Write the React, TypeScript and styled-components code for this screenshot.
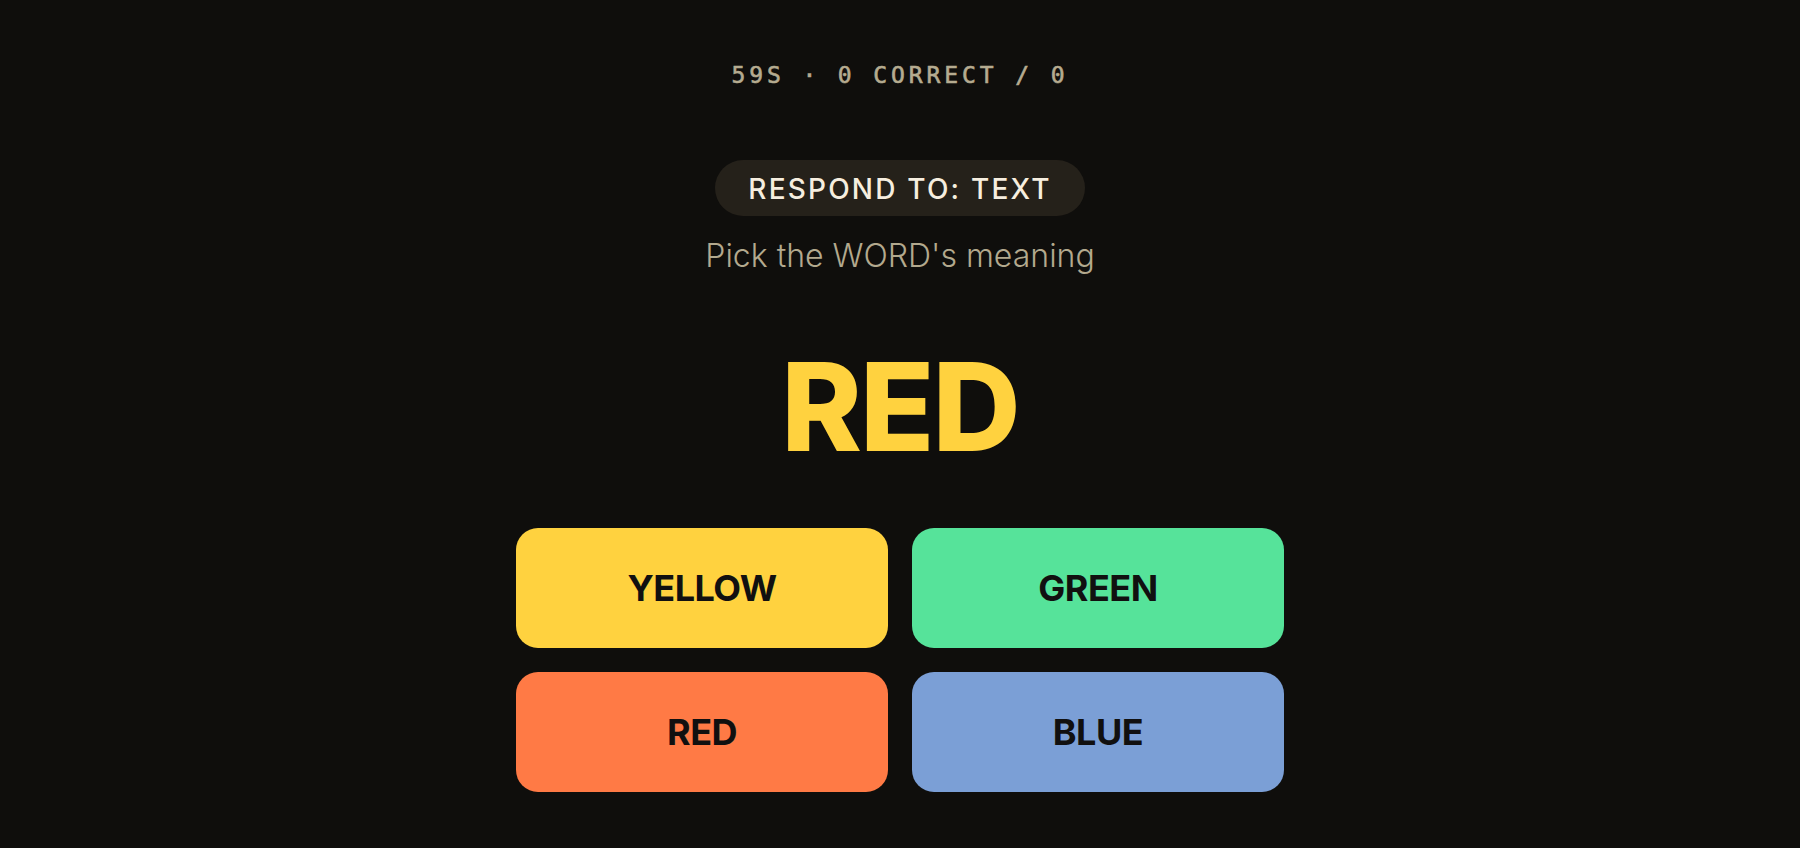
import React from "react";
import styled, { createGlobalStyle } from "styled-components";

const Global = createGlobalStyle`
  html, body { margin: 0; padding: 0; background: #0f0e0c; }
  body { font-family: Inter, "Noto Sans", sans-serif; }
`;

const Page = styled.main`
  min-height: 848px;
  box-sizing: border-box;
  padding-top: 61px;
  display: flex;
  flex-direction: column;
  align-items: center;
  background: #0f0e0c;
`;

const Stats = styled.div`
  font-family: "DejaVu Sans Mono", "Liberation Mono", monospace;
  font-size: 23px;
  line-height: 28px;
  letter-spacing: 3.9px;
  font-weight: 400;
  color: #b5ab90;
  -webkit-text-stroke: 0.6px #b5ab90;
  text-transform: uppercase;
`;

const Pill = styled.div`
  margin-top: 71px;
  height: 56px;
  box-sizing: border-box;
  padding: 2px 33px 0;
  border-radius: 28px;
  background: #25211a;
  color: #f6eedf;
  font-size: 28px;
  line-height: 54px;
  font-weight: 500;
  letter-spacing: 2.2px;
`;

const Hint = styled.div`
  margin-top: 20px;
  font-size: 32px;
  line-height: 40px;
  font-weight: 300;
  color: #b3a98e;
`;

const Word = styled.div<{ $color: string }>`
  margin-top: 70px;
  font-size: 122px;
  line-height: 122px;
  font-weight: 800;
  letter-spacing: -2px;
  color: ${(p) => p.$color};
`;

const Grid = styled.div`
  margin-top: 60px;
  width: 768px;
  display: grid;
  grid-template-columns: 1fr 1fr;
  grid-auto-rows: 120px;
  gap: 24px;
`;

const Choice = styled.button<{ $bg: string }>`
  border: none;
  border-radius: 22px;
  background: ${(p) => p.$bg};
  color: #111010;
  font-family: Inter, "Noto Sans", sans-serif;
  font-size: 36px;
  font-weight: 700;
  letter-spacing: -0.5px;
  display: flex;
  align-items: center;
  justify-content: center;
  cursor: pointer;
  padding: 0;
`;

const choices = [
  { label: "YELLOW", bg: "#ffd23f" },
  { label: "GREEN", bg: "#56e39a" },
  { label: "RED", bg: "#ff7a45" },
  { label: "BLUE", bg: "#7b9fd6" },
];

export default function App() {
  return (
    <>
      <Global />
      <Page>
        <Stats>59s · 0 correct / 0</Stats>
        <Pill>RESPOND TO: TEXT</Pill>
        <Hint>Pick the WORD's meaning</Hint>
        <Word $color="#ffd23f">RED</Word>
        <Grid>
          {choices.map((c) => (
            <Choice key={c.label} $bg={c.bg}>
              {c.label}
            </Choice>
          ))}
        </Grid>
      </Page>
    </>
  );
}
